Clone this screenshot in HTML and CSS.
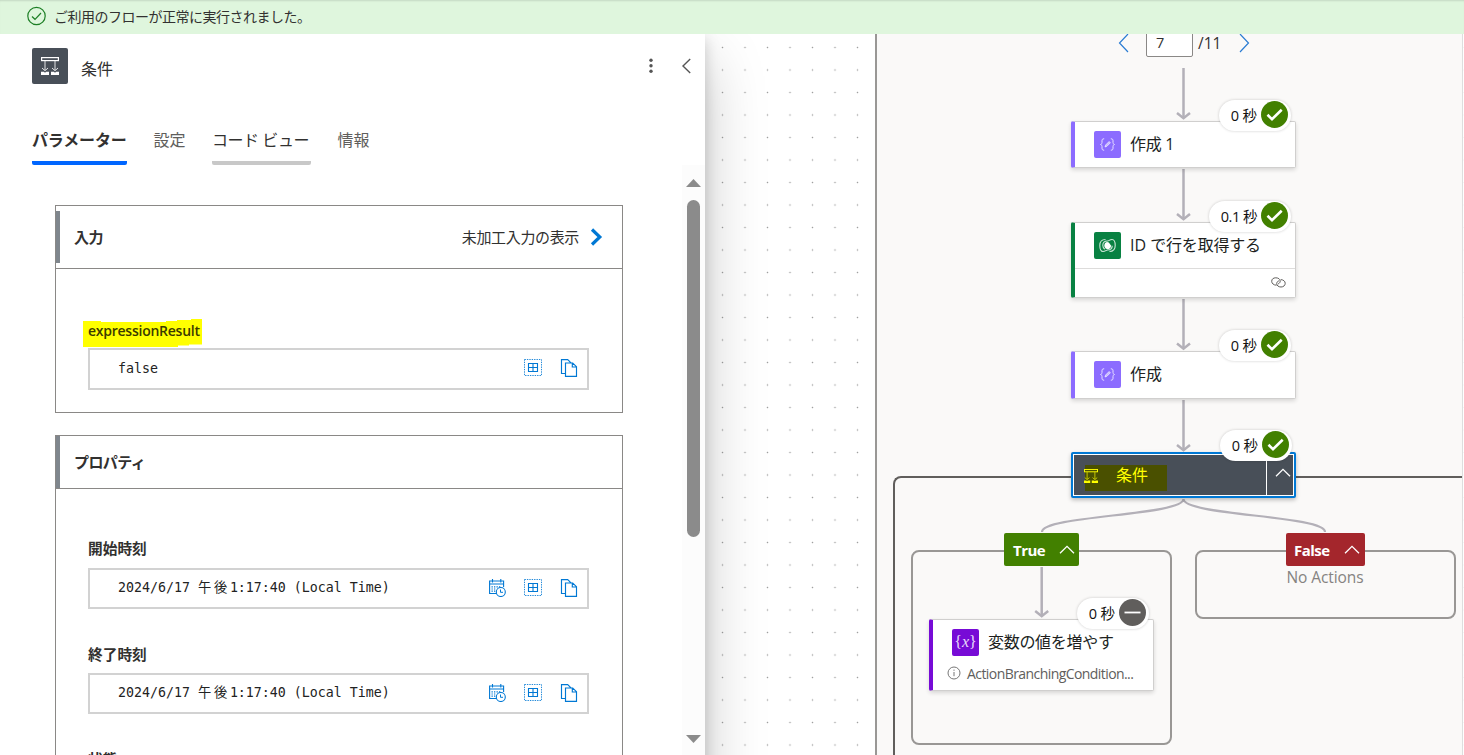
FILE: index.html
```html
<!DOCTYPE html>
<html lang="ja">
<head>
<meta charset="utf-8">
<title>フロー</title>
<link rel="stylesheet" href="styles.css">
</head>
<body>
<svg class="defs" width="0" height="0" aria-hidden="true">
  <defs>
    <symbol id="i-cond" viewBox="0 0 18 18">
      <rect x=".6" y=".6" width="16.8" height="3" fill="none" stroke="currentColor" stroke-width="1.2"/>
      <path d="M4 4v9M14 4v9M1 11l3 2.7L7 11M11 11l3 2.7 3-2.7" fill="none" stroke="currentColor" stroke-width="1" opacity=".85"/>
      <path d="M0 14.800h3l1 .9 1-.9h3V18H0zM10 14.800h3l1 .9 1-.9h3V18h-8z" fill="currentColor"/>
    </symbol>
    <symbol id="i-table" viewBox="0 0 18 18">
      <rect x=".5" y=".5" width="17" height="16" fill="none" stroke="currentColor" stroke-dasharray="1.4 1" opacity=".85"/>
      <path d="M4.500 4.500h9v8h-9zM9 4.500v8M4.500 8.500h9" fill="none" stroke="currentColor" stroke-width="1.1"/>
    </symbol>
    <symbol id="i-copy" viewBox="0 0 18 18">
      <path d="M5.500 14.500H1.500V.6h6.200l3.300 3.200M5.500 4h7.200l3.800 3.700v9.700h-11zM12.300 4v4h4" fill="none" stroke="currentColor" stroke-width="1.150"/>
    </symbol>
    <symbol id="i-cal" viewBox="0 0 18 18">
      <path d="M8 14.500H1.600V2h14v6M1.600 5h14M4.500 0v3.500M12.800 0v3.500" fill="none" stroke="currentColor" stroke-width="1.1"/>
      <path d="M3.500 7.800h10M3.500 10h5M3.500 12.200h4" fill="none" stroke="currentColor" stroke-dasharray="1.300 1.200" stroke-width="1.200"/>
      <circle cx="12.800" cy="13" r="4.500" fill="#fff" stroke="currentColor" stroke-width="1.100"/>
      <path d="M12.500 10.500v2.800h2.500" fill="none" stroke="currentColor"/>
    </symbol>
    <symbol id="i-ok" viewBox="0 0 27 27">
      <circle cx="13.500" cy="13.500" r="13.500" fill="#428000"/>
      <path d="M6.500 13.800l4.500 4.400 9.700-9.400" fill="none" stroke="#fff" stroke-width="2.600"/>
    </symbol>
    <symbol id="i-up" viewBox="0 0 16 9">
      <path d="M1 8.300l7-7 7 7" fill="none" stroke="#fff" stroke-width="1.300"/>
    </symbol>
    <symbol id="i-compose" viewBox="0 0 27 27">
      <path d="M10.200 7.800c-2 0-2.200.8-2.200 2v1.600c0 1.200-.5 1.800-1.500 2.100 1 .3 1.500.9 1.500 2.100v1.600c0 1.200.2 2 2.200 2M16.800 7.800c2 0 2.200.8 2.200 2v1.600c0 1.200.5 1.800 1.500 2.100-1 .3-1.500.9-1.500 2.100v1.600c0 1.200-.2 2-2.200 2" fill="none" stroke="#e6dfff" stroke-width="1"/>
      <path d="M11 16l.6-2 3.500-3.500 1.300 1.300-3.500 3.500z" fill="#c8baff" stroke="#fff" stroke-width=".6"/>
    </symbol>
  </defs>
</svg>

<div class="banner">
  <svg width="20" height="20" viewBox="0 0 20 20"><circle cx="9.500" cy="10" r="8.700" fill="none" stroke="#1d7f25" stroke-width="1.200"/><path d="M5 10.500l3 2.800 6-6.300" fill="none" stroke="#1d7f25" stroke-width="1.200"/></svg>
  <span>ご利用のフローが正常に実行されました。</span>
</div>

<div class="main">
  <aside class="panel">
    <header class="panel-head">
      <span class="panel-icon"><svg width="18" height="18"><use href="#i-cond"/></svg></span>
      <h1>条件</h1>
      <svg class="more" width="4" height="16" viewBox="0 0 4 16" fill="#555"><circle cx="2" cy="2.200" r="1.700"/><circle cx="2" cy="7.700" r="1.700"/><circle cx="2" cy="13.200" r="1.700"/></svg>
      <svg class="collapse" width="10" height="16" viewBox="0 0 10 16"><path d="M9.200 1L2 8l7.200 7" fill="none" stroke="#555" stroke-width="1.400"/></svg>
    </header>
    <nav class="tabs">
      <span class="tab tab-active">パラメーター</span>
      <span class="tab tab-plain">設定</span>
      <span class="tab tab-hover">コード ビュー</span>
      <span class="tab tab-plain">情報</span>
    </nav>
    <div class="scroll">
      <div class="content">
        <section class="card card-in">
          <div class="card-head card-head-in">
            <h2>入力</h2>
            <span class="raw">未加工入力の表示</span>
            <svg width="14" height="18" viewBox="0 0 14 18"><path d="M2 1.500L9.800 9 2 16.500" fill="none" stroke="#0078d4" stroke-width="3.200"/></svg>
          </div>
          <div class="card-body body-in">
            <div class="label label-mark">
              <svg class="mark" width="119" height="28" viewBox="0 0 119 28"><path d="M0 2h18v1h65V2h11V1h14V0h11v25.500h-13v1H95v1.500H0z" fill="#ff0"/></svg>
              <span>expressionResult</span>
            </div>
            <div class="field field-tall">
              <span class="val">false</span>
              <svg width="18" height="18"><use href="#i-table"/></svg>
              <svg width="18" height="18"><use href="#i-copy"/></svg>
            </div>
          </div>
        </section>
        <section class="card card-prop">
          <div class="card-head card-head-prop"><h2 class="kana">プロパティ</h2></div>
          <div class="card-body body-prop">
            <div class="label">開始時刻</div>
            <div class="field">
              <span class="val">2024/6/17 <span class="wide">午後</span>1:17:40 (Local Time)</span>
              <svg width="18" height="18"><use href="#i-cal"/></svg>
              <svg width="18" height="18"><use href="#i-table"/></svg>
              <svg width="18" height="18"><use href="#i-copy"/></svg>
            </div>
            <div class="label label-next">終了時刻</div>
            <div class="field">
              <span class="val">2024/6/17 <span class="wide">午後</span>1:17:40 (Local Time)</span>
              <svg width="18" height="18"><use href="#i-cal"/></svg>
              <svg width="18" height="18"><use href="#i-table"/></svg>
              <svg width="18" height="18"><use href="#i-copy"/></svg>
            </div>
            <div class="label label-next">状態</div>
          </div>
        </section>
      </div>
      <div class="bar">
        <svg width="15" height="8" viewBox="0 0 15 8"><path d="M7.500 0L15 8H0z" fill="#8b8b8b"/></svg>
        <div class="thumb"></div>
        <svg class="down" width="15" height="8" viewBox="0 0 15 8"><path d="M7.500 8L15 0H0z" fill="#8b8b8b"/></svg>
      </div>
    </div>
  </aside>

  <div class="canvas">
    <div class="flow">
      <div class="scope scope-loop"></div>
      <div class="scope scope-cond"></div>
      <div class="scope scope-true"></div>
      <div class="scope scope-false"></div>
      <svg class="edges" width="1464" height="755" fill="none" stroke="#b3b0b8" stroke-width="2.500">
        <path d="M1183.500 68v49M1183.500 169v49M1183.500 299v49M1183.500 400v49M1041.700 567v49"/>
        <path d="M1177 113l6.500 5.200 6.500-5.200M1177 214l6.500 5.200 6.500-5.200M1177 343.500l6.500 5.200 6.500-5.200M1177 445l6.500 5.200 6.500-5.200M1035.200 611l6.500 5.200 6.500-5.200"/>
        <path d="M1183.500 499C1183.500 515.500 1042 515.500 1042 532M1183.500 499C1183.500 515.500 1325 515.500 1325 532" stroke-width="2.200"/>
      </svg>

      <div class="pager">
        <svg width="11" height="20" viewBox="0 0 11 20"><path d="M10 1L1.500 10l8.500 9" fill="none" stroke="#2a7cd3" stroke-width="1.200"/></svg>
        <span class="page">7</span>
        <span class="total">/11</span>
        <svg width="11" height="20" viewBox="0 0 11 20"><path d="M1 1l8.500 9L1 19" fill="none" stroke="#2a7cd3" stroke-width="1.200"/></svg>
      </div>

      <div class="node n1 violet">
        <div class="node-row"><span class="chip"><svg width="27" height="27"><use href="#i-compose"/></svg></span><span class="name t-one">作成 1</span></div>
      </div>
      <div class="node n2 green">
        <div class="node-row"><span class="chip"><svg width="27" height="27" viewBox="0 0 27 27" fill="none" stroke="#cfe8da"><path d="M11.500 7.500C7.500 7.500 5.800 10 5.800 13.500S7 19.500 9 19.500c2.400 0 3-1.500 4.500-1.500 3 0 4.700-1.700 4.700-4.200M15.500 19.500c4 0 5.700-2.500 5.700-6s-1.200-6-3.200-6c-2.400 0-3 1.500-4.500 1.500-3 0-4.700 1.700-4.700 4.200 0 2 .8 3.300 2 4" stroke-width="1.100"/><path d="M13 10l1.800.4 2.200 3c.2 2-1.300 3.700-3.300 3.900l-2.200-.8-1.200-2.300c-.2-2.200 1-4 2.700-4.200z" fill="#fff" stroke="none"/></svg></span><span class="name">ID <span class="t-id-ja">で行を取得する</span></span></div>
        <div class="node-foot"><svg width="15" height="11" viewBox="0 0 15 11" fill="none" stroke="#605e5c"><path d="M5.500 8.200C2.800 8.200.7 6.500.7 4.300S2.300.8 4.800.8s4.400 1.300 4.400 3.300c0 1.300-.8 2.300-2 2.800"/><path d="M9.800 2.600c2.600.2 4.400 1.600 4.400 3.700s-1.700 3.700-4.200 3.700-4.300-1.500-4.300-3.300c0-1.400.8-2.400 2.200-2.900"/></svg></div>
      </div>
      <div class="node n3 violet">
        <div class="node-row"><span class="chip"><svg width="27" height="27"><use href="#i-compose"/></svg></span><span class="name">作成</span></div>
      </div>
      <div class="cond">
        <div class="cond-main"><span class="cond-mark"><svg width="14" height="14"><use href="#i-cond"/></svg><span>条件</span></span></div>
        <div class="cond-toggle"><svg width="16" height="9"><use href="#i-up"/></svg></div>
      </div>
      <div class="branch b-true"><span>True</span><svg width="16" height="9"><use href="#i-up"/></svg></div>
      <div class="branch b-false"><span>False</span><svg width="16" height="9"><use href="#i-up"/></svg></div>
      <div class="noact">No Actions</div>
      <div class="node n4 purple">
        <div class="node-row"><span class="chip var">{<i>x</i>}</span><span class="name t-var">変数の値を増やす</span></div>
        <div class="node-note"><svg width="14" height="14" viewBox="0 0 14 14"><circle cx="7" cy="7" r="6" fill="none" stroke="#777"/><path d="M7 6v4.200M7 3.600v1.200" stroke="#777"/></svg><span>ActionBranchingCondition...</span></div>
      </div>

      <div class="pill p1"><span>0 秒</span><svg width="27" height="27"><use href="#i-ok"/></svg></div>
      <div class="pill p2"><span>0.1 秒</span><svg width="27" height="27"><use href="#i-ok"/></svg></div>
      <div class="pill p3"><span>0 秒</span><svg width="27" height="27"><use href="#i-ok"/></svg></div>
      <div class="pill p4"><span>0 秒</span><svg width="27" height="27"><use href="#i-ok"/></svg></div>
      <div class="pill p5"><span>0 秒</span><svg width="27" height="27" viewBox="0 0 27 27"><circle cx="13.500" cy="13.500" r="13.500" fill="#605e5c"/><path d="M5.500 13.500h16" stroke="#fff" stroke-width="1.800"/></svg></div>
    </div>
  </div>
</div>
</body>
</html>
```
FILE: styles.css
```css
* { box-sizing: border-box; }
body {
  margin: 0;
  width: 1464px;
  height: 755px;
  overflow: hidden;
  display: flex;
  flex-direction: column;
  font-family: "Open Sans", "Noto Sans CJK JP", sans-serif;
  font-size: 16px;
  color: #323130;
  background: #fff;
  white-space: nowrap;
}
svg { display: block; flex: none; }
.defs { position: absolute; }
h1, h2 { margin: 0; }

.banner {
  height: 34px;
  flex: none;
  display: flex;
  align-items: center;
  padding: 0 0 2px 27px;
  gap: 7px;
  background: #dff6dd;
  box-shadow: inset 0 2px 2px -1px rgba(0, 0, 0, .12);
  font-size: 14px;
  letter-spacing: -.5px;
}

.main { flex: 1; min-height: 0; display: flex; overflow: hidden; }

/* Details panel */
.panel {
  position: relative;
  z-index: 2;
  width: 705px;
  height: 900px;
  flex: none;
  background: #fff;
  box-shadow: 0 25.6px 57.6px rgba(0, 0, 0, .22), 0 4.8px 14.4px rgba(0, 0, 0, .18);
}
.panel-head { height: 68px; display: flex; align-items: center; padding: 0 14px 4px 32px; }
.panel-icon {
  width: 36px;
  height: 36px;
  display: grid;
  place-items: center;
  border-radius: 2px;
  background: #484f58;
  color: #fff;
}
h1 { font-size: 16px; font-weight: 400; line-height: 24px; padding: 6px 0 0 13px; flex: 1; }
.more { margin-right: 28px; }

.tabs { height: 63px; display: flex; align-items: flex-start; padding: 25px 0 0 32px; gap: 26.5px; }
.tab { height: 38px; line-height: 27px; border-bottom: 4px solid transparent; border-radius: 2px; }
.tab-active {
  width: 95px;
  font-weight: 700;
  letter-spacing: -.15px;
  background: linear-gradient(#0066ff, #0066ff) bottom / 100% 4px no-repeat border-box;
}
.tab-hover {
  width: 99px;
  letter-spacing: -.45px;
  background: linear-gradient(#c8c8c8, #c8c8c8) bottom / 100% 4px no-repeat border-box;
}
.tab-plain { width: 32px; color: #605e5c; }

.scroll { display: flex; height: 590px; overflow: hidden; }
.content { flex: 1; padding: 40px 59px 0 55px; display: flex; flex-direction: column; gap: 22px; }
.card { border: 1px solid #8a8886; flex: none; }
.card-in { height: 208px; }
.card-prop { height: 420px; }
.card-head { display: flex; align-items: center; border-bottom: 1px solid #8a8886; }
.card-head-in { height: 63px; padding-right: 18px; background: linear-gradient(#7f868d, #7f868d) 0 5px / 4px 52px no-repeat; }
.card-head-prop { height: 53px; background: linear-gradient(#7f868d, #7f868d) 0 0 / 4px 100% no-repeat; }
h2 { flex: 1; padding-left: 18px; font-size: 15px; line-height: 22px; font-weight: 700; letter-spacing: -.4px; }
h2.kana { letter-spacing: -.6px; }
.raw { font-size: 15px; letter-spacing: -.35px; margin-right: 11px; padding-bottom: 2px; }
.card-body { padding: 0 33px 0 32px; }
.body-in { padding-top: 51px; }
.body-prop { padding-top: 48px; }
.label { font-size: 14.7px; font-weight: 700; line-height: 22px; height: 22px; margin-bottom: 9px; }
.label-next { margin-top: 34px; margin-bottom: 8px; }
.label-mark { position: relative; font-weight: 600; font-size: 14px; letter-spacing: -.25px; margin-bottom: 6px; color: #3b3a00; }
.label-mark span { position: relative; }
.mark { position: absolute; left: -5px; top: -1px; }
.field {
  height: 41px;
  border: 2px solid #d2d2d2;
  display: flex;
  align-items: center;
  gap: 18px;
  padding: 0 9px 2px 28px;
  color: #0078d4;
}
.field-tall { height: 42px; }
.val {
  flex: 1;
  padding-top: 1px;
  font-family: "DejaVu Sans Mono", "Noto Sans CJK JP", monospace;
  font-size: 13.29px;
  line-height: 20px;
  color: #222;
}
.wide { letter-spacing: 2.67px; }

.bar { width: 23px; display: flex; flex-direction: column; align-items: center; padding: 14px 0 12px; background: #fcfcfc; }
.thumb { width: 13px; height: 337px; margin-top: 13px; border-radius: 7px; background: #8b8b8b; }
.down { margin-top: auto; }

/* Flow canvas: nodes sit at window coordinates */
.canvas { position: relative; flex: 1; height: 721px; overflow: hidden; }
.flow {
  position: absolute;
  left: -705px;
  top: -34px;
  width: 1464px;
  height: 755px;
  background: radial-gradient(circle at 11.25px 11.25px, #a0a0a0 .5px, transparent 1.1px) 711.25px 36.25px / 22.5px 22.5px;
}
.scope, .edges, .pager, .node, .cond, .branch, .noact, .pill { position: absolute; }
.edges { left: 0; top: 0; }
.scope { border: 2px solid #999795; border-radius: 8px; }
.scope-loop { left: 875px; top: -40px; width: 588px; height: 900px; border-right: 1px solid #dedede; background: #faf9f8; border-radius: 0; }
.scope-cond { left: 893px; top: 476px; width: 569px; height: 400px; border-color: #605e5c; border-right: 0; border-radius: 8px 0 0 0; }
.scope-true { left: 911px; top: 550px; width: 261px; height: 195px; }
.scope-false { left: 1195px; top: 550px; width: 261px; height: 69px; }

.pager { left: 1118px; top: 29px; height: 28px; display: flex; align-items: center; font-size: 14.5px; }
.page {
  width: 47px;
  height: 28px;
  margin-left: 17px;
  padding-left: 9px;
  line-height: 26px;
  border: 1px solid #8a8886;
  border-radius: 2px;
  background: #fff;
}
.total { width: 46px; padding: 0 0 1px 5px; font-size: 15.5px; }

.node {
  width: 225px;
  border: 1px solid #d0cfce;
  border-left-width: 4px;
  border-radius: 2px;
  background: #fff;
  box-shadow: 0 2px 4px rgba(0, 0, 0, .14);
  color: #201f1e;
}
.n1 { left: 1071px; top: 121px; height: 47px; }
.n2 { left: 1071px; top: 222px; height: 76px; }
.n3 { left: 1071px; top: 351px; height: 48px; }
.n4 { left: 929px; top: 619px; height: 72px; }
.violet { border-left-color: #8c6cff; }
.green { border-left-color: #088142; }
.purple { border-left-color: #770bd6; }
.node-row { height: 46px; display: flex; align-items: center; gap: 9px; padding: 0 0 1px 19px; line-height: 24px; }
.name { padding-bottom: 2px; }
.t-one { letter-spacing: -.3px; }
.chip { width: 27px; height: 27px; border-radius: 2px; flex: none; }
.violet .chip { background: #8c6cff; }
.green .chip { background: #088142; }
.purple .chip { background: #770bd6; }
.var { font-family: "Liberation Serif", serif; font-size: 16px; line-height: 25px; text-align: center; color: #eadcfa; }
.t-id-ja { letter-spacing: -.2px; }
.t-var { letter-spacing: -.3px; }
.node-foot { height: 29px; margin-top: -1px; border-top: 1px solid #dddcdb; display: flex; justify-content: flex-end; align-items: center; padding: 0 9px 2px 0; }
.node-note { display: flex; align-items: center; gap: 6px; padding: 0 0 2px 14px; height: 16px; font-size: 14px; letter-spacing: -.57px; color: #605e5c; }

.cond {
  left: 1071px;
  top: 452px;
  width: 225px;
  height: 46px;
  display: flex;
  border: 2px solid #0078d4;
  border-radius: 2px;
  background: #484f58;
  box-shadow: inset 0 0 0 1px #fff, 0 2px 4px rgba(0, 0, 0, .25);
}
.cond-main { flex: 1; padding: 11px 0 0 12px; }
.cond-mark { width: 82px; height: 26px; display: flex; align-items: center; gap: 17px; padding-bottom: 6px; background: #4a5000; color: #ff0; }
.cond-mark svg { margin: 0 0 -1px -1px; }
.cond-mark span { padding-bottom: 2px; margin-left: 1px; }
.cond-toggle { width: 27px; margin: 1px 1px 1px 0; border-left: 1px solid #fff; display: flex; align-items: center; justify-content: flex-end; padding: 0 2px 5px 0; }
.branch { top: 533px; height: 33px; display: flex; align-items: center; justify-content: space-between; padding: 0 5px 0 9px; border-radius: 2px; color: #fff; font-size: 15px; font-weight: 700; letter-spacing: -.5px; }
.b-true { left: 1004px; width: 75px; padding-right: 4px; background: #428000; }
.b-false { left: 1286px; width: 79px; padding-left: 8px; background: #a4262c; }
.noact { left: 1285px; width: 80px; top: 566px; font-size: 15.5px; line-height: 22px; letter-spacing: -.1px; color: #858381; display: flex; justify-content: center; }

.pill {
  width: 72px;
  height: 31px;
  display: flex;
  align-items: center;
  justify-content: flex-end;
  gap: 4px;
  padding: 0 3px 2px 0;
  border-radius: 16px;
  background: #fff;
  box-shadow: 0 0 3px rgba(0, 0, 0, .2);
  color: #111;
  font-size: 14.5px;
}
.pill span { letter-spacing: -.1px; }
.p1 { left: 1219px; top: 100px; }
.p2 { left: 1209px; top: 201px; width: 82px; }
.p2 span { letter-spacing: -.5px; }
.p3 { left: 1219px; top: 330px; }
.p4 { left: 1220px; top: 430px; }
.p5 { left: 1077px; top: 598px; }
```
